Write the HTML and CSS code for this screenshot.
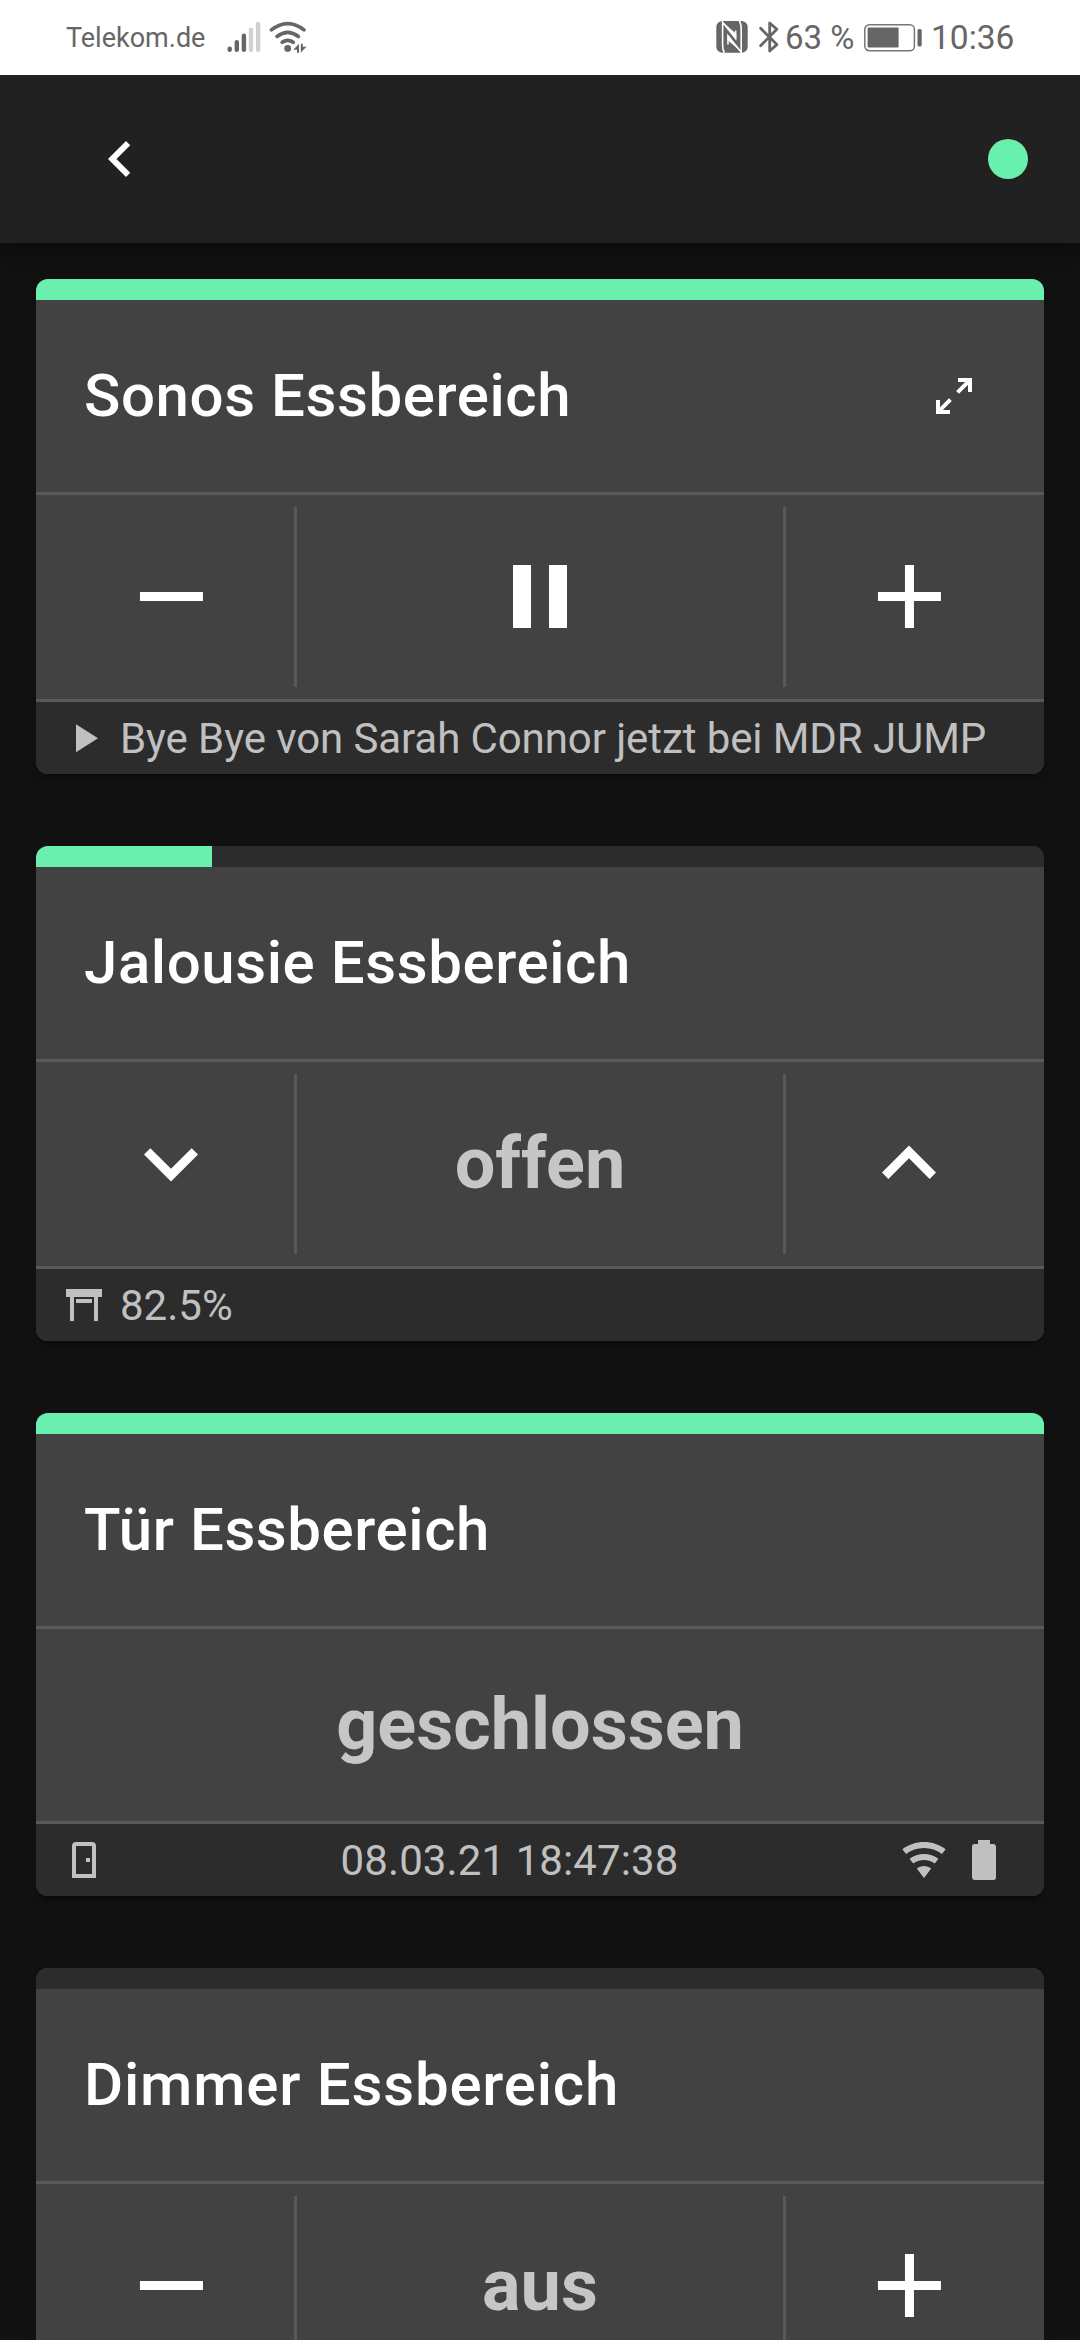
FILE: index.html
```html
<!DOCTYPE html>
<html lang="de">
<head>
<meta charset="utf-8">
<title>Essbereich</title>
<link rel="stylesheet" href="styles.css">
</head>
<body>
<div class="statusbar">
  <span class="carrier">Telekom.de</span>
  <svg class="signal" width="34" height="32" viewBox="0 0 34 32">
    <g stroke="#666" stroke-width="4.4" stroke-linecap="round">
      <path d="M2.7 27.6v1.2M9.8 21.2v7.6M16.9 14.8v14"/>
      <path stroke="#d0d0d0" d="M24 8.6v20.2M31.1 3v25.8"/>
    </g>
  </svg>
  <svg class="wlan" width="38" height="32" viewBox="0 0 38 32">
    <g fill="none" stroke="#666" stroke-width="3.6" stroke-linecap="round">
      <path d="M2.4 8.9Q18.7-3.7 35 8.9M8 15.5q10.7-8.3 21.4 0M13.2 21.3q5.5-3.9 11 0"/>
    </g>
    <circle cx="18.7" cy="27.4" r="3.4" fill="#666"/>
    <path fill="#666" d="M30 22.8v9h-2v-3h-3.7zM31.8 31.8v-9h2v3h3.8l-3.8 3.6z"/>
  </svg>
  <span class="spacer"></span>
  <svg class="nfc" width="32" height="32" viewBox="0 0 32 32">
    <rect x=".3" y="0" width="31.4" height="31.7" rx="6" fill="#666"/>
    <path fill="none" stroke="#fff" stroke-width="1.6" d="M8.4 31.8Q6.6 29 6.6 24V1.2L19.6 17.4V9.5M23.4-.2Q25.2 3 25.2 8v23.2L12 14.8V23.5"/>
    <path fill="#fff" d="M6.2.5 20.3 13v5.5zM25.7 31.2 11.5 19v-5.6z"/>
  </svg>
  <svg class="bluetooth" width="20" height="32" viewBox="0 0 20 32">
    <path fill="none" stroke="#666" stroke-width="2.8" stroke-linejoin="round" stroke-linecap="round" d="M1.6 7.3 17.8 23.6 10.7 30V2l7.1 6.3L1.6 24.8"/>
  </svg>
  <span class="percent">63 %</span>
  <svg class="power" width="58" height="28" viewBox="0 0 58 28">
    <rect x=".8" y=".8" width="49.6" height="25.9" rx="4.5" fill="none" stroke="#777" stroke-width="1.5"/>
    <rect x="3.6" y="3.5" width="31" height="20" rx="1" fill="#666"/>
    <rect x="53.5" y="5" width="4.2" height="17.5" rx="1.5" fill="#666"/>
  </svg>
  <span class="clock">10:36</span>
</div>

<header class="appbar">
  <svg class="back" viewBox="0 0 24 24"><path d="M15.41,16.58L10.83,12L15.41,7.41L14,6L8,12L14,18L15.41,16.58Z"/></svg>
  <span class="online"></span>
</header>

<main class="cards">
  <section class="card">
    <div class="level"><div class="level-fill" style="width:100%"></div></div>
    <div class="title"><h2>Sonos Essbereich</h2>
      <svg class="icon-s" viewBox="0 0 24 24"><path d="M10,21V19H6.41L10.91,14.5L9.5,13.09L5,17.59V14H3V21H10M14.5,10.91L19,6.41V10H21V3H14V5H17.59L13.09,9.5L14.5,10.91Z"/></svg>
    </div>
    <div class="controls">
      <div class="cell first"><svg class="icon-l" viewBox="-.1 .1 24 24"><path d="M19,13H5V11H19V13Z"/></svg></div>
      <div class="cell middle"><svg class="icon-l" viewBox="0 .1 24 24"><path d="M14,19H18V5H14M6,19H10V5H6V19Z"/></svg></div>
      <div class="cell last"><svg class="icon-l" viewBox="-.1 .1 24 24"><path d="M19,13H13V19H11V13H5V11H11V5H13V11H19V13Z"/></svg></div>
    </div>
    <div class="foot">
      <svg class="icon-s" viewBox="0 0 24 24"><path d="M8,5.14V19.14L19,12.14L8,5.14Z"/></svg>
      <span class="info song">Bye Bye von Sarah Connor jetzt bei MDR JUMP</span>
    </div>
  </section>

  <section class="card">
    <div class="level"><div class="level-fill" style="width:17.5%"></div></div>
    <div class="title"><h2>Jalousie Essbereich</h2></div>
    <div class="controls">
      <div class="cell first"><svg class="icon-l" viewBox="0 .1 24 24"><path d="M7.41,8.58L12,13.17L16.59,8.58L18,10L12,16L6,10L7.41,8.58Z"/></svg></div>
      <div class="cell middle"><span class="value">offen</span></div>
      <div class="cell last"><svg class="icon-l" viewBox="0 .1 24 24"><path d="M7.41,15.41L12,10.83L16.59,15.41L18,14L12,8L6,14L7.41,15.41Z"/></svg></div>
    </div>
    <div class="foot">
      <svg class="icon-s" viewBox="0 0 24 24"><path d="M3 4H21V8H19V20H17V8H7V20H5V8H3V4M8 9H16V11H8V9Z"/></svg>
      <span class="info">82.5%</span>
    </div>
  </section>

  <section class="card">
    <div class="level"><div class="level-fill" style="width:100%"></div></div>
    <div class="title"><h2>Tür Essbereich</h2></div>
    <div class="controls short">
      <div class="cell whole"><span class="value">geschlossen</span></div>
    </div>
    <div class="foot">
      <svg class="icon-s" viewBox="0 0 24 24"><path fill-rule="evenodd" d="M6,21V5A2,2 0 0,1 8,3H16A2,2 0 0,1 18,5V21H6M8,5V19H16V5H8M13,11H15V13H13V11Z"/></svg>
      <span class="info stamp">08.03.21 18:47:38</span>
      <svg class="icon-s" viewBox="0 0 24 24"><path d="M12,21L15.6,16.2C14.6,15.45 13.35,15 12,15C10.65,15 9.4,15.45 8.4,16.2L12,21M12,3C7.95,3 4.21,4.34 1.2,6.6L3,9C5.5,7.12 8.62,6 12,6C15.38,6 18.5,7.12 21,9L22.8,6.6C19.79,4.34 16.05,3 12,3M12,9C9.3,9 6.81,9.89 4.8,11.4L6.6,13.8C8.1,12.67 9.97,12 12,12C14.03,12 15.9,12.67 17.4,13.8L19.2,11.4C17.19,9.89 14.7,9 12,9Z"/></svg>
      <svg class="icon-s" viewBox="0 0 24 24"><path d="M16.67,4H15V2H9V4H7.33A1.33,1.33 0 0,0 6,5.33V20.67C6,21.4 6.6,22 7.33,22H16.67A1.33,1.33 0 0,0 18,20.67V5.33C18,4.6 17.4,4 16.67,4Z"/></svg>
    </div>
  </section>

  <section class="card">
    <div class="level"></div>
    <div class="title"><h2 class="wide">Dimmer Essbereich</h2></div>
    <div class="controls">
      <div class="cell first"><svg class="icon-l" viewBox="-.1 .1 24 24"><path d="M19,13H5V11H19V13Z"/></svg></div>
      <div class="cell middle"><span class="value">aus</span></div>
      <div class="cell last"><svg class="icon-l" viewBox="-.1 .1 24 24"><path d="M19,13H13V19H11V13H5V11H11V5H13V11H19V13Z"/></svg></div>
    </div>
    <div class="foot"></div>
  </section>
</main>
</body>
</html>
```
FILE: styles.css
```css
* {
  box-sizing: border-box;
}

body {
  margin: 0;
  height: 2340px;
  overflow: hidden;
  background: #121212;
  color: #fff;
  font-family: Roboto, "Liberation Sans", sans-serif;
}

svg {
  display: block;
  flex: none;
}

.statusbar {
  position: relative;
  z-index: 2;
  display: flex;
  align-items: flex-start;
  height: 75px;
  padding: 21px 65px 0 66px;
  background: #fff;
  color: #666;
  line-height: 34px;
  white-space: nowrap;
}

.carrier {
  width: 161px;
  font-size: 27px;
}

.wlan {
  margin-left: 8px;
}

.spacer {
  flex: 1;
}

.bluetooth {
  margin-left: 11px;
}

.percent {
  width: 79px;
  margin-left: 6px;
  font-size: 33px;
}

.power {
  margin-top: 3px;
}

.clock {
  width: 84px;
  margin-left: 9px;
  font-size: 33.5px;
}

.appbar {
  position: relative;
  display: flex;
  align-items: center;
  justify-content: space-between;
  height: 168px;
  padding: 0 52px 0 84px;
  background: #212121;
  box-shadow: 0 6px 12px -3px rgba(0, 0, 0, .2), 0 12px 15px rgba(0, 0, 0, .14), 0 3px 30px rgba(0, 0, 0, .12);
}

.back {
  width: 72px;
  height: 72px;
  fill: #fff;
}

.online {
  width: 40px;
  height: 40px;
  border-radius: 50%;
  background: #69f0ae;
}

.cards {
  display: flex;
  flex-direction: column;
  gap: 72px;
  padding: 36px;
}

.card {
  overflow: hidden;
  flex: none;
  border-radius: 12px;
  background: #424242;
  box-shadow: 0 9px 3px -6px rgba(0, 0, 0, .2), 0 6px 6px rgba(0, 0, 0, .14), 0 3px 15px rgba(0, 0, 0, .12);
}

.level {
  height: 21px;
  background: #2c2c2c;
}

.level-fill {
  height: 100%;
  background: #69f0ae;
}

.title {
  display: flex;
  align-items: center;
  justify-content: space-between;
  height: 192px;
  padding: 0 66px 0 48px;
}

.title h2 {
  margin: 0 0 2px;
  font-size: 60px;
  font-weight: 500;
  letter-spacing: .58px;
  white-space: nowrap;
}

.title .wide {
  letter-spacing: .8px;
}

.icon-s {
  width: 48px;
  height: 48px;
  fill: currentColor;
}

.icon-l {
  width: 108px;
  height: 108px;
  fill: #fff;
}

.controls {
  display: flex;
  align-items: center;
  height: 210px;
  border-top: 3px solid #595959;
  border-bottom: 3px solid #595959;
}

.controls.short {
  height: 198px;
}

.cell {
  display: flex;
  align-items: center;
  justify-content: center;
  height: 180px;
}

.first {
  width: 258px;
  padding-left: 12px;
}

.middle {
  flex: 1;
  border-left: 3px solid #595959;
  border-right: 3px solid #595959;
}

.last {
  width: 258px;
  padding-right: 12px;
}

.whole {
  flex: 1;
}

.value {
  margin-bottom: 1px;
  color: #c6c6c6;
  font-size: 72px;
  font-weight: 700;
}

.foot {
  display: flex;
  align-items: center;
  gap: 12px;
  height: 72px;
  padding: 0 36px 0 24px;
  background: #2c2c2c;
  color: #c0c0c0;
}

.info {
  font-size: 42px;
  white-space: nowrap;
}

.song {
  letter-spacing: -.09px;
}

.stamp {
  flex: 1;
  padding-left: 11px;
  letter-spacing: .1px;
  text-align: center;
}
```
